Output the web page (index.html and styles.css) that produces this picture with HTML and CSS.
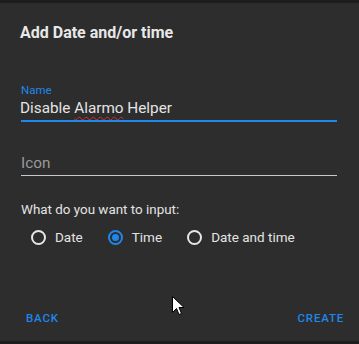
FILE: index.html
```html
<!DOCTYPE html>
<html>
<head>
<meta charset="utf-8">
<link rel="stylesheet" href="styles.css">
</head>
<body>
<div class="dialog">
  <div class="content">
    <h2 class="title">Add Date and/or time</h2>
    <div class="field active">
      <div class="label">Name</div>
      <div class="value">Disable <span class="spell">Alarmo</span> Helper</div>
    </div>
    <div class="field">
      <div class="placeholder">Icon</div>
    </div>
    <div class="question">What do you want to input:</div>
    <div class="radios">
      <div class="radio"><span class="circle"></span><span class="rlabel">Date</span></div>
      <div class="radio"><span class="circle checked"></span><span class="rlabel">Time</span></div>
      <div class="radio"><span class="circle"></span><span class="rlabel">Date and time</span></div>
    </div>
  </div>
  <div class="actions">
    <span class="btn">BACK</span>
    <span class="btn">CREATE</span>
  </div>
  <svg class="cursor" width="13" height="20" viewBox="0 0 13 20">
    <path d="M0.5 0.5 L0.5 16.5 L4.5 12.5 L7 18.5 L9.5 17.5 L7 11.5 L12 11.5 Z" fill="#fff" stroke="#000" stroke-width="1"/>
  </svg>
</div>
</body>
</html>
```
FILE: styles.css
```css
html, body {
  margin: 0;
  padding: 0;
  background: #1c1c1c;
  width: 359px;
  height: 344px;
  overflow: hidden;
}
.dialog {
  position: relative;
  margin-top: 3px;
  height: 338px;
  background: #2d2d2d;
  display: flex;
  flex-direction: column;
  font-family: Roboto, sans-serif;
}
.content {
  padding: 0 22px 0 20px;
}
.title {
  margin: 20px 0 0 0;
  font-weight: 700;
  font-size: 16px;
  line-height: 20px;
  color: #e8e8e8;
}
.field {
  border-bottom: 1px solid #c8c8c8;
  margin-left: 1px;
}
.field.active {
  margin-top: 41px;
  border-bottom: 2px solid #1f87ec;
  padding-bottom: 3px;
}
.label {
  font-size: 11.5px;
  line-height: 12px;
  color: #1f87ec;
}
.value {
  font-size: 15.3px;
  line-height: 18px;
  color: #e4e4e4;
  margin-top: 3px;
  margin-left: -1px;
}
.spell {
  text-decoration: underline wavy #d32f2f;
  text-decoration-thickness: 1px;
  text-underline-offset: 3px;
}
.field + .field {
  margin-top: 32px;
  padding-bottom: 3px;
}
.placeholder {
  font-size: 15.3px;
  line-height: 18px;
  color: #9a9a9a;
}
.question {
  margin-top: 26px;
  margin-left: 1px;
  font-size: 13.4px;
  line-height: 16px;
  color: #e4e4e4;
}
.radios {
  display: flex;
  gap: 25px;
  margin-top: 9px;
  margin-left: 11px;
  height: 20px;
  align-items: center;
}
.radio {
  display: flex;
  align-items: center;
  gap: 9px;
}
.circle {
  box-sizing: border-box;
  width: 15px;
  height: 15px;
  border: 2px solid #e6e6e6;
  border-radius: 50%;
  display: flex;
  align-items: center;
  justify-content: center;
}
.circle.checked {
  border-color: #1f87ec;
}
.circle.checked::after {
  content: "";
  width: 7px;
  height: 7px;
  border-radius: 50%;
  background: #1f87ec;
}
.rlabel {
  font-size: 13.5px;
  line-height: 20px;
  color: #e4e4e4;
}
.actions {
  margin-top: auto;
  display: flex;
  justify-content: space-between;
  padding: 0 15px 15px 26px;
}
.btn {
  font-weight: 500;
  font-size: 11.5px;
  line-height: 16px;
  letter-spacing: 0.8px;
  color: #1f87ec;
}
.cursor {
  position: absolute;
  left: 172px;
  top: 293px;
}
```
